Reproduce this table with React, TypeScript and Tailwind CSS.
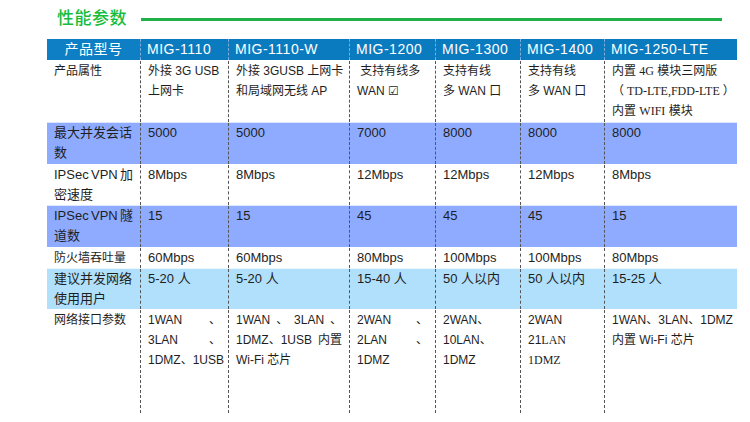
import React from 'react';

type Line = string | { t: string; j?: boolean; serif?: boolean; parts?: { t: string; serif?: boolean }[] };

type Row = {
  label: Line[];
  cells: Line[][];
  bg: string;
  h: string;
  ls: string;
  cs: string;
};

// 规格表数据
const rows: Row[] = [
  {
    label: ['产品属性'],
    bg: 'bg-white',
    h: 'h-[62px]',
    ls: 'text-[12px]',
    cs: 'text-[12px]',
    cells: [
      ['外接 3G USB', '上网卡'],
      ['外接 3GUSB 上网卡', '和局域网无线 AP'],
      ['\u00a0支持有线多', 'WAN ☑'],
      ['支持有线', '多 WAN 口'],
      ['支持有线', '多 WAN 口'],
      [
        { t: '', parts: [{ t: '内置 ' }, { t: '4G', serif: true }, { t: ' 模块三网版' }] },
        { t: '（ TD-LTE,FDD-LTE ）', serif: true },
        { t: '', parts: [{ t: '内置 ' }, { t: 'WIFI', serif: true }, { t: ' 模块' }] },
      ],
    ],
  },
  {
    label: ['最大并发会话', '数'],
    bg: 'bg-[#8eabff]',
    h: 'h-[42px]',
    ls: 'text-[13px]',
    cs: 'text-[13px]',
    cells: [['5000'], ['5000'], ['7000'], ['8000'], ['8000'], ['8000']],
  },
  {
    label: [{ t: 'IPSec VPN 加', j: true }, '密速度'],
    bg: 'bg-white',
    h: 'h-[41px]',
    ls: 'text-[13px]',
    cs: 'text-[13px]',
    cells: [['8Mbps'], ['8Mbps'], ['12Mbps'], ['12Mbps'], ['12Mbps'], ['8Mbps']],
  },
  {
    label: [{ t: 'IPSec VPN 隧', j: true }, '道数'],
    bg: 'bg-[#8eabff]',
    h: 'h-[42px]',
    ls: 'text-[13px]',
    cs: 'text-[13px]',
    cells: [['15'], ['15'], ['45'], ['45'], ['45'], ['15']],
  },
  {
    label: ['防火墙吞吐量'],
    bg: 'bg-white',
    h: 'h-[21px]',
    ls: 'text-[12px]',
    cs: 'text-[13px]',
    cells: [['60Mbps'], ['60Mbps'], ['80Mbps'], ['100Mbps'], ['100Mbps'], ['80Mbps']],
  },
  {
    label: ['建议并发网络', '使用用户'],
    bg: 'bg-[#b1e0fc]',
    h: 'h-[41px]',
    ls: 'text-[13px]',
    cs: 'text-[13px]',
    cells: [['5-20 人'], ['5-20 人'], ['15-40 人'], ['50 人以内'], ['50 人以内'], ['15-25 人']],
  },
  {
    label: ['网络接口参数'],
    bg: 'bg-white',
    h: 'h-[104px]',
    ls: 'text-[12px]',
    cs: 'text-[12px]',
    cells: [
      [{ t: '1WAN 、', j: true }, { t: '3LAN 、', j: true }, '1DMZ、1USB'],
      [{ t: '1WAN 、 3LAN 、', j: true }, { t: '1DMZ、1USB 内置', j: true }, 'Wi-Fi 芯片'],
      [{ t: '2WAN 、', j: true }, { t: '2LAN 、', j: true }, '1DMZ'],
      ['2WAN、', '10LAN、', '1DMZ'],
      ['2WAN', { t: '', parts: [{ t: '21' }, { t: 'LAN', serif: true }] }, { t: '1DMZ', serif: true }],
      ['1WAN、3LAN、1DMZ', '内置 Wi-Fi 芯片'],
    ],
  },
];

const models = ['MIG-1110', 'MIG-1110-W', 'MIG-1200', 'MIG-1300', 'MIG-1400', 'MIG-1250-LTE'];

const cols = 'grid grid-cols-[93px_88px_121px_86px_85px_84px_133px]';
const serif = "font-['Liberation_Serif','Noto_Sans_CJK_SC',serif]";

const renderLine = (line: Line, i: number) => {
  if (typeof line === 'string') {
    return (
      <div key={i} className="whitespace-pre">
        {line}
      </div>
    );
  }
  if (line.parts) {
    return (
      <div key={i} className="whitespace-pre">
        {line.parts.map((p, k) => (
          <span key={k} className={p.serif ? serif : ''}>
            {p.t}
          </span>
        ))}
      </div>
    );
  }
  if (line.j) {
    return (
      <div key={i} className="flex justify-between whitespace-nowrap">
        {line.t.split(' ').map((w, k) => (
          <span key={k}>{w}</span>
        ))}
      </div>
    );
  }
  return (
    <div key={i} className={`whitespace-pre ${line.serif ? serif : ''}`}>
      {line.t}
    </div>
  );
};

const App = () => {
  return (
    <div className="w-[750px] h-[422px] bg-white font-['Liberation_Sans','Noto_Sans_CJK_SC',sans-serif] text-[#1e1e1e]">
      {/* 标题 */}
      <div className="flex items-center pt-[8px] pl-[57px] pr-[28px] h-[30px]">
        <h2 className="text-[17px] leading-[22px] font-medium text-[#16bd3c] tracking-[0.5px]">性能参数</h2>
        <div className="ml-[14px] flex-1 h-[3px] bg-[#1fb04a]"></div>
      </div>

      {/* 表格 */}
      <div className="mt-[9px] ml-[47px] w-[690px]">
        <div className={`${cols} h-[21px] bg-[#0b7bbf] text-white text-[14px] leading-[21px] tracking-[0.5px]`}>
          <div className="text-center bg-[#0e7fc4]">产品型号</div>
          {models.map((m) => (
            <div key={m} className="pl-[6px] border-l border-dashed border-[#7fa9d6]">
              {m}
            </div>
          ))}
        </div>

        {rows.map((r, idx) => (
          <div key={idx} className={`${cols} ${r.h} ${r.bg} leading-[20px] border-t border-white/70`}>
            <div className={`pl-[7px] pr-[7px] ${r.ls}`}>{r.label.map(renderLine)}</div>
            {r.cells.map((c, k) => (
              <div key={k} className={`pl-[7px] pr-[7px] border-l border-dashed border-[#555] ${r.cs}`}>
                {c.map(renderLine)}
              </div>
            ))}
          </div>
        ))}
      </div>
    </div>
  );
};

export default App;
